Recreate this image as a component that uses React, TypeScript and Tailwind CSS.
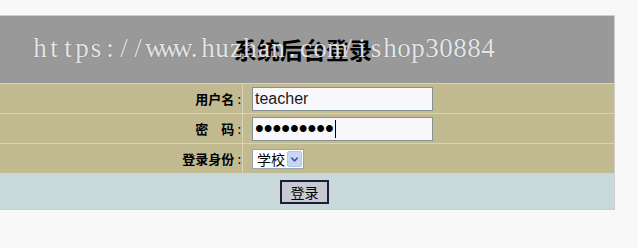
import { ChevronDown } from "lucide-react";

const watermark = "https://www.huzhan.com/ishop30884";

function LabelCell({ children }: { children: React.ReactNode }) {
  return (
    <div className="flex items-center justify-end bg-[#c2ba91] pr-[1px] text-[13px] font-bold text-black">
      {children}
      <span className="ml-[3px] font-normal">:</span>
    </div>
  );
}

export default function App() {
  return (
    <div className="min-h-screen bg-[#f8f8f8] pt-[15px] font-['Noto_Sans_CJK_SC',sans-serif]">
      <div className="flex w-[615px] flex-col gap-px border-y border-r border-[#cdcdcd] bg-[#d9d3b7]">
        <div className="relative flex h-[67px] items-center justify-center bg-[#999999]">
          <h1 className="pr-[8px] text-[23px] font-bold leading-none text-black">系统后台登录</h1>
          <div className="pointer-events-none absolute left-[33px] top-[19px] flex font-['Liberation_Serif',serif] text-[27px] leading-none text-[#f6f6f6]/90 [text-shadow:0_0_1px_rgba(60,60,60,0.6)]">
            {watermark.split("").map((ch, i) => (
              <span className="inline-block w-[14px] text-center" key={i}>
                {ch}
              </span>
            ))}
          </div>
        </div>

        <div className="grid h-[29px] grid-cols-[242px_1fr] gap-px">
          <LabelCell>用户名</LabelCell>
          <div className="flex items-start bg-[#c2ba91] pl-[9px] pt-[3px]">
            <div className="flex h-[24px] w-[181px] items-center border border-[#84938f] bg-[#f8f8fc] pl-[2px] font-['Liberation_Sans',sans-serif] text-[16px] text-[#1a1a1a]">
              teacher
            </div>
          </div>
        </div>

        <div className="grid h-[29px] grid-cols-[242px_1fr] gap-px">
          <LabelCell>密　码</LabelCell>
          <div className="flex items-start bg-[#c2ba91] pl-[9px] pt-[3px]">
            <div className="flex h-[24px] w-[181px] items-center border border-[#84938f] bg-[#f8f8fc] pl-[2px] font-['Liberation_Sans',sans-serif] text-[25px] leading-none text-black">
              <span className="-mt-[2px]">•••••••••</span>
              <span className="ml-[1px] h-[18px] w-px bg-black" />
            </div>
          </div>
        </div>

        <div className="grid h-[29px] grid-cols-[242px_1fr] gap-px">
          <LabelCell>登录身份</LabelCell>
          <div className="flex items-start bg-[#c2ba91] pl-[9px] pt-[5px]">
            <div className="flex h-[20px] w-[52px] items-center justify-between border border-[#9aa3a8] bg-white pl-[4px] pr-px text-[14px] leading-none text-black">
              学校
              <span className="flex h-[16px] w-[15px] items-center justify-center rounded-[2px] border border-[#b1c4ea] bg-[#c6d6f6] text-[#4a5f8c]">
                <ChevronDown size={11} strokeWidth={3.5} />
              </span>
            </div>
          </div>
        </div>

        <div className="flex h-[35px] items-start justify-center bg-[#c9d8d8] pr-[6px] pt-[6px]">
          <button
            className="flex h-[24px] w-[49px] items-center justify-center border-2 border-[#1c1c3c] bg-[#c8cad2] pl-[1px] text-[14px] leading-none text-black"
            type="button"
          >
            登录
          </button>
        </div>
      </div>
    </div>
  );
}
